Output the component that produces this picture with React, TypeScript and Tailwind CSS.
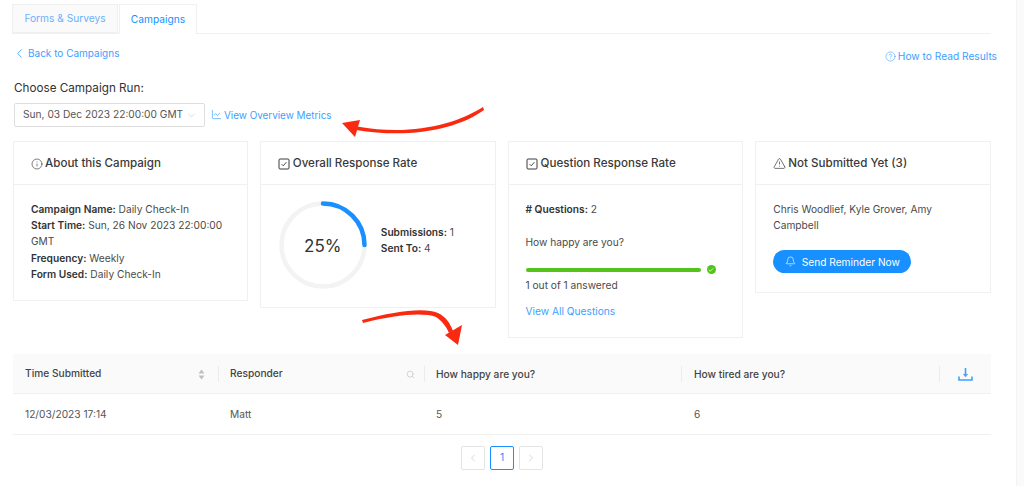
import { ChevronLeft, ChevronRight, ChevronDown, LineChart, CircleHelp, Info, TriangleAlert, Bell, Search, Check } from 'lucide-react';

function CheckBox() {
    return (
        <svg width="12" height="12" viewBox="0 0 12 12" fill="none" stroke="currentColor" className="mr-[1px]">
            <rect x="1" y="1" width="10" height="10" rx="1" strokeWidth="1" />
            <path d="M3.6 6.1L5.3 7.8L8.4 4.2" strokeWidth="0.9" />
        </svg>
    );
}

function Card({ icon, title, className, children }: { icon: React.ReactNode; title: string; className: string; children: React.ReactNode }) {
    return (
        <div className={`border border-[#f0f0f0] bg-white ${className}`}>
            <div className="h-[43px] border-b border-[#f0f0f0] pl-[17px] pt-[1px] flex items-center gap-[2px] text-[11.6px] font-medium text-[#3a3a3a]">
                {icon}
                {title}
            </div>
            {children}
        </div>
    );
}

export default function App() {
    return (
        <div className="relative w-[1024px] h-[486px] overflow-hidden bg-white font-['Inter',sans-serif] text-[10.2px] text-[#4a4a4a]">
            {/* Scrollbar gutter */}
            <div className="absolute right-0 top-0 w-[8px] h-full bg-[#fafafa] border-l border-[#f3f3f3]" />

            <div className="pl-[12px] w-[991px] pt-[4px]">
                {/* Tabs */}
                <div className="flex h-[30px] border-b border-[#f0f0f0] gap-[1px]">
                    <div className="w-[106px] h-[29px] flex items-center justify-center bg-[#fafafa] border border-[#f0f0f0] text-[#69b1ff]">Forms &amp; Surveys</div>
                    <div className="w-[78px] h-[30px] flex items-center justify-center bg-white border border-b-0 border-[#f0f0f0] text-[#1890ff]">Campaigns</div>
                </div>

                {/* Back + help */}
                <div className="flex justify-between items-start mt-[12px] h-[15px] pl-[2px] text-[#40a0ff]">
                    <div className="flex items-center gap-[1px] -ml-[2px] text-[10px]">
                        <ChevronLeft size={15} strokeWidth={1.4} />
                        Back to Campaigns
                    </div>
                    <div className="flex items-center gap-[2px] mt-[3px] mr-[-6px]">
                        <CircleHelp size={11} strokeWidth={1.3} />
                        How to Read Results
                    </div>
                </div>

                {/* Campaign run picker */}
                <div className="pl-[2px] mt-[19px] h-[16px] leading-[16px] text-[11.7px] text-[#333]">Choose Campaign Run:</div>
                <div className="flex items-center mt-[7px] pl-[2px] h-[24px]">
                    <div className="w-[191px] h-[24px] border border-[#dedede] rounded-[2px] pl-[8px] pr-[7px] flex items-center justify-between text-[#555] whitespace-nowrap">
                        Sun, 03 Dec 2023 22:00:00 GMT
                        <ChevronDown size={11} strokeWidth={1.2} className="text-[#bbb]" />
                    </div>
                    <div className="flex items-center gap-[2px] ml-[6px] text-[#40a0ff] text-[9.9px]">
                        <LineChart size={11} strokeWidth={1.5} />
                        View Overview Metrics
                    </div>
                </div>

                {/* Stat cards */}
                <div className="flex items-start gap-[12px] mt-[14px] pl-[1px]">
                    <Card className="w-[235px] h-[160px]" title="About this Campaign" icon={<Info size={12} strokeWidth={1.3} />}>
                        <div className="pl-[17px] pr-[10px] pt-[16px] leading-[16.2px]">
                            <div><b className="font-semibold text-[#333]">Campaign Name:</b> Daily Check-In</div>
                            <div><b className="font-semibold text-[#333]">Start Time:</b> Sun, 26 Nov 2023 22:00:00<br />GMT</div>
                            <div><b className="font-semibold text-[#333]">Frequency:</b> Weekly</div>
                            <div><b className="font-semibold text-[#333]">Form Used:</b> Daily Check-In</div>
                        </div>
                    </Card>

                    <Card className="w-[236px] h-[167px]" title="Overall Response Rate" icon={<CheckBox />}>
                        <div className="flex items-center pl-[18px] pt-[16px]">
                            <div className="relative w-[88px] h-[88px] pt-[3px] flex items-center justify-center text-[17px] text-[#333]">
                                <svg viewBox="0 0 88 88" className="absolute inset-0">
                                    <circle cx="44" cy="44" r="41.5" fill="none" stroke="#f3f3f3" strokeWidth="4.5" />
                                    <path d="M44 2.5A41.5 41.5 0 0 1 85.5 44" fill="none" stroke="#1890ff" strokeWidth="4.5" strokeLinecap="round" />
                                </svg>
                                25%
                            </div>
                            <div className="ml-[14px] -mt-[11px] leading-[16px]">
                                <div><b className="font-semibold text-[#333]">Submissions:</b> 1</div>
                                <div><b className="font-semibold text-[#333]">Sent To:</b> 4</div>
                            </div>
                        </div>
                    </Card>

                    <Card className="w-[236px] h-[197px]" title="Question Response Rate" icon={<CheckBox />}>
                        <div className="pl-[17px] pt-[16px] leading-[16px]">
                            <div><b className="font-semibold text-[#333]"># Questions:</b> 2</div>
                            <div className="mt-[17px]">How happy are you?</div>
                            <div className="flex items-center mt-[15px] h-[9px]">
                                <div className="w-[175px] h-[4px] rounded-full bg-[#52c41a]" />
                                <div className="ml-[6px] w-[9px] h-[9px] rounded-full bg-[#52c41a] flex items-center justify-center">
                                    <Check size={6} strokeWidth={3} className="text-white" />
                                </div>
                            </div>
                            <div className="mt-[3px]">1 out of 1 answered</div>
                            <div className="mt-[10px] text-[#40a0ff]">View All Questions</div>
                        </div>
                    </Card>

                    <Card className="w-[236px] h-[152px]" title="Not Submitted Yet (3)" icon={<TriangleAlert size={13} strokeWidth={1.3} />}>
                        <div className="pl-[17px] pr-[12px] pt-[16px] leading-[16px]">
                            <div>Chris Woodlief, Kyle Grover, Amy Campbell</div>
                            <div className="mt-[17px] w-[138px] h-[23px] rounded-full bg-[#1890ff] text-white flex items-center justify-center gap-[6px]">
                                <Bell size={11} strokeWidth={1.4} />
                                Send Reminder Now
                            </div>
                        </div>
                    </Card>
                </div>

                {/* Responses table */}
                <div className="pl-[1px]">
                    <div className="flex h-[40px] bg-[#fafafa] border-b border-[#f0f0f0] items-center font-medium text-[#444] mt-[16px] pt-[1px]">
                        <div className="w-[206px] flex items-center justify-between pl-[12px] pr-[13px] h-[16px] border-r border-[#ececec]">
                            Time Submitted
                            <svg width="7" height="11" viewBox="0 0 7 11" fill="#bfbfbf">
                                <path d="M3.5 0.5L6.5 4.5H0.5Z" />
                                <path d="M3.5 10.5L6.5 6.5H0.5Z" />
                            </svg>
                        </div>
                        <div className="w-[206px] flex items-center justify-between pl-[11px] pr-[9px] h-[16px] border-r border-[#ececec]">
                            Responder
                            <Search size={9} className="text-[#c8c8c8]" />
                        </div>
                        <div className="w-[257px] pl-[11px] h-[16px] leading-[16px] border-r border-[#ececec]">How happy are you?</div>
                        <div className="w-[258px] pl-[12px] h-[16px] leading-[16px] border-r border-[#ececec]">How tired are you?</div>
                        <div className="flex-1 flex justify-center text-[#40a0ff]">
                            <svg width="15" height="15" viewBox="0 0 15 15" fill="none" stroke="currentColor" strokeWidth="1.6">
                                <path d="M7.5 1V8" />
                                <path d="M5.2 7.2H9.8L7.5 10Z" fill="currentColor" strokeWidth="0.4" />
                                <path d="M1 9.500V13H14V9.500" />
                            </svg>
                        </div>
                    </div>
                    <div className="flex h-[41px] pt-[1px] items-center border-b border-[#f0f0f0] text-[#555]">
                        <div className="w-[206px] pl-[12px]">12/03/2023 17:14</div>
                        <div className="w-[206px] pl-[11px]">Matt</div>
                        <div className="w-[257px] pl-[11px]">5</div>
                        <div className="w-[258px] pl-[12px]">6</div>
                    </div>
                </div>

                {/* Pagination */}
                <div className="flex mt-[11px] ml-[449px] gap-[5px]">
                    <div className="w-[24px] h-[24px] border border-[#e4e4e4] rounded-[2px] flex items-center justify-center text-[#c4c4c4]">
                        <ChevronLeft size={12} strokeWidth={1.3} />
                    </div>
                    <div className="w-[24px] h-[24px] border border-[#1890ff] rounded-[2px] flex items-center justify-center text-[#1890ff]">1</div>
                    <div className="w-[24px] h-[24px] border border-[#e4e4e4] rounded-[2px] flex items-center justify-center text-[#c4c4c4]">
                        <ChevronRight size={12} strokeWidth={1.3} />
                    </div>
                </div>
            </div>

            {/* Red annotation arrows */}
            <svg className="absolute inset-0 pointer-events-none" width="1024" height="486" viewBox="0 0 1024 486">
                <path d="M483 107C455 125 410 136 357 126.500L356 130C410 139 458 129 484 110Z" fill="#fa2a10" />
                <path d="M342 123L360 120L355 137Z" fill="#fa2a10" />
                <path d="M362 320C395 311 425 307 438 313C446 317 450 323 453 331L449 333C446 326 442 321 436 317C422 312 395 315 363 323Z" fill="#fa2a10" />
                <path d="M445 335L462 325L458 345Z" fill="#fa2a10" />
            </svg>
        </div>
    );
}
